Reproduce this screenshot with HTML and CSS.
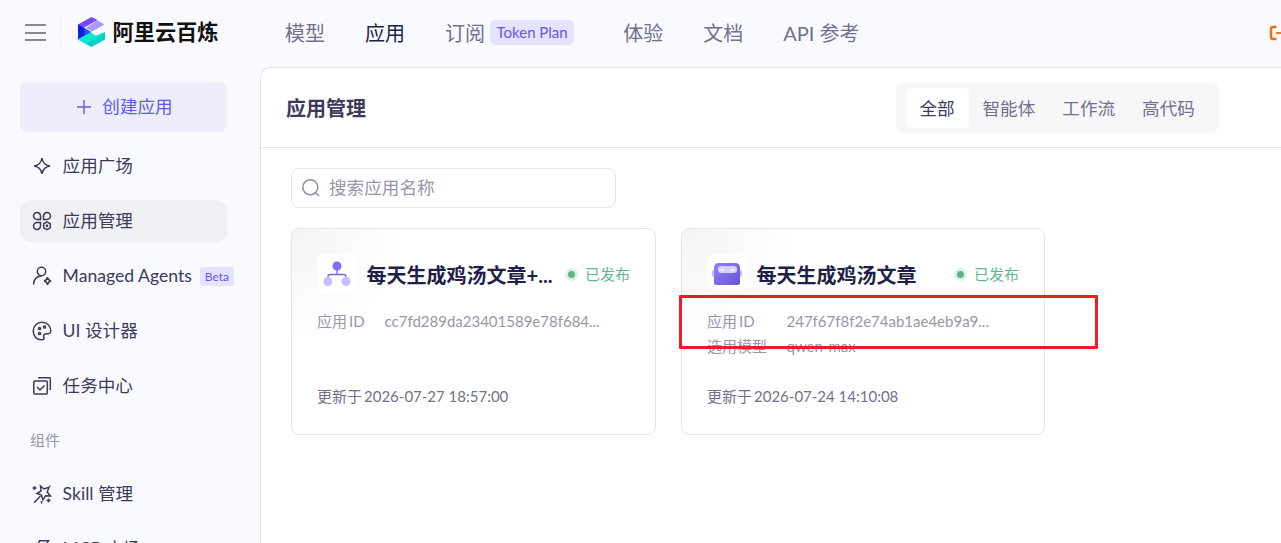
FILE: index.html
```html
<!DOCTYPE html>
<html lang="zh-CN">
<head>
    <meta charset="UTF-8">
    <meta name="viewport" content="width=device-width, initial-scale=1.0">
    <title>阿里云百炼</title>
    <link rel="stylesheet" href="styles.css">
</head>
<body>

    <!-- Top bar -->
    <header class="topbar">
        <div class="menu-btn"><span></span><span></span><span></span></div>
        <div class="brand">
            <svg class="logo" width="28" height="30" viewBox="0 0 28 30">
                <path d="M0 7.5 13.5 0l6 3L0 14z" fill="#7647ff"/>
                <path d="M19 3.2 26.5 7.5 14 14.5 8 11z" fill="#a999ff"/>
                <path d="M0 7.5 13 15 0 22.5z" fill="#0a22dc"/>
                <path d="M6.5 11.2 13 15l-6.500 3.800z" fill="#2858e6"/>
                <path d="M0 22.500 12.500 15.500 18 19l9-4v7.500L13.500 30z" fill="#02cfc8"/>
                <path d="M0 22.500 12.500 15.500 18 19 27 15v1.500L8 27z" fill="#05ead2"/>
            </svg>
            <span class="brand-name">阿里云百炼</span>
        </div>
        <nav class="nav">
            <a>模型</a>
            <a class="active">应用</a>
            <a>订阅<span class="tag">Token Plan</span></a>
            <a>体验</a>
            <a>文档</a>
            <a>API 参考</a>
        </nav>
        <svg class="ticket" width="12" height="16" viewBox="0 0 12 16" fill="none" stroke="#ff6a00">
            <path d="M7.500 2H4Q2 2 2 4v8q0 2 2 2h3.500" stroke-width="2.500"/>
            <path d="M7 8h5" stroke-width="1.800"/>
        </svg>
    </header>

    <div class="layout">
        <!-- Sidebar -->
        <aside class="sidebar">
            <button class="create-btn">
                <svg width="16" height="16" viewBox="0 0 16 16" fill="none" stroke="currentColor" stroke-width="1.400"><path d="M8 1v14M1 8h14"/></svg>
                创建应用
            </button>
            <div class="item">
                <svg class="icon" viewBox="0 0 20 20"><path d="M10 2Q11 9 18 10 11 11 10 18 9 11 2 10 9 9 10 2z"/></svg>
                应用广场
            </div>
            <div class="item selected">
                <svg class="icon" viewBox="0 0 20 20">
                    <path d="M8.500 8.500H5.200A3.500 3.500 0 1 1 8.500 5.200zM11.500 8.500V5.200a3.500 3.500 0 1 1 3.300 3.300zM8.500 11.500v3.300a3.500 3.500 0 1 1-3.300-3.300z"/>
                    <path d="M15 10.900 18.300 12.800v4L15 18.700l-3.300-1.900v-4z"/>
                    <circle cx="15" cy="14.800" r=".6"/>
                </svg>
                应用管理
            </div>
            <div class="item">
                <svg class="icon" viewBox="0 0 20 20">
                    <circle cx="9.500" cy="5.500" r="4.200"/>
                    <path d="M1.500 18.500Q1.800 11 9.500 9.800M15.500 11Q16 14.500 19 15 16 15.500 15.500 19 15 15.500 12 15 15 14.500 15.500 11z"/>
                </svg>
                Managed Agents<span class="beta">Beta</span>
            </div>
            <div class="item">
                <svg class="icon" viewBox="0 0 20 20">
                    <path d="M11 18.600C5 19.800 1.200 15 1.200 10a8.800 8.800 0 0 1 17.600 0c0 2-1.500 3-3.300 2.800-3-.5-4.500 1.200-3.700 3.200.4 1 .2 2.200-.8 2.600z"/>
                    <circle cx="7.500" cy="7.500" r="1.100"/><circle cx="12.500" cy="6" r="1.100"/><circle cx="7.500" cy="12.500" r="1.100"/>
                </svg>
                UI 设计器
            </div>
            <div class="item">
                <svg class="icon" viewBox="0 0 20 20"><rect x="1.800" y="5" width="13.500" height="13" rx="1"/><path d="M6 1.800h11.500q.8 0 .8.800V14M5 11l3 3 4.500-4.500"/></svg>
                任务中心
            </div>
            <div class="group">组件</div>
            <div class="item">
                <svg class="icon" viewBox="0 0 20 20">
                    <path d="M8.500 2 12 5l5-1.800-1.800 4.800 3.300 4-5-.3-2.500 4.300-1.500-5-4.500-1.500L9 7zM8.500 12 2 18.800M2.500 2v4M.5 4h4M16.500 14.500v4M14.500 16.500h4M9.500 17v2.500M18 1.500v1"/>
                </svg>
                Skill 管理
            </div>
            <div class="item">
                <svg class="icon" viewBox="0 0 20 20"><path d="M7.500 1.800h9L12.500 8H17L6 18.500 8.500 11H4z"/></svg>
                MCP 广场
            </div>
        </aside>

        <!-- Main Content -->
        <main class="main">
            <div class="page-header">
                <h1>应用管理</h1>
                <div class="tabs">
                    <span class="tab current">全部</span>
                    <span class="tab">智能体</span>
                    <span class="tab">工作流</span>
                    <span class="tab">高代码</span>
                </div>
            </div>

            <div class="content">
                <div class="search">
                    <svg width="20" height="20" viewBox="0 0 20 20" fill="none" stroke="#8f8ca3" stroke-width="1.500"><circle cx="9.300" cy="9.300" r="7.500"/><path d="m14.500 14.500 3.500 3.500"/></svg>
                    <span>搜索应用名称</span>
                </div>

                <div class="cards">
                    <div class="card">
                        <div class="card-head">
                            <div class="app-icon">
                                <svg width="40" height="40" viewBox="0 0 40 40">
                                    <path d="M20 12v8.500M11 27v-4.500q0-2 2-2h14q2 0 2 2V27" fill="none" stroke="#7764ee" stroke-width="1.300"/>
                                    <circle cx="20" cy="12" r="4.500" fill="#856cf6"/>
                                    <circle cx="11" cy="27.500" r="4.500" fill="#c5bfff"/>
                                    <circle cx="29" cy="27.500" r="4.500" fill="#c5bfff"/>
                                </svg>
                            </div>
                            <h2>每天生成鸡汤文章+...</h2>
                            <span class="status"><i></i>已发布</span>
                        </div>
                        <dl class="info">
                            <dt>应用<span>ID</span></dt><dd>cc7fd289da23401589e78f684...</dd>
                        </dl>
                        <p class="updated">更新于<span>2026-07-27 18:57:00</span></p>
                    </div>

                    <div class="card">
                        <div class="card-head">
                            <div class="app-icon">
                                <svg width="40" height="40" viewBox="0 0 40 40">
                                    <defs>
                                        <linearGradient id="bot" x1="0" y1="0" x2="1" y2="1">
                                            <stop offset="0" stop-color="#9480ff"/>
                                            <stop offset="1" stop-color="#6254d2"/>
                                        </linearGradient>
                                    </defs>
                                    <rect x="5" y="16" width="30" height="7" rx="2" fill="#c5bdff"/>
                                    <path d="M7 14q0-5 5-5h16q5 0 5 5v15q0 2-2 2H9q-2 0-2-2z" fill="url(#bot)"/>
                                    <rect x="11" y="12" width="19" height="7" rx="3" fill="#d7d0fa"/>
                                    <path d="M14.500 16h2M24.500 16h2" stroke="#fff" stroke-width="1.600" stroke-linecap="round"/>
                                </svg>
                            </div>
                            <h2>每天生成鸡汤文章</h2>
                            <span class="status"><i></i>已发布</span>
                        </div>
                        <dl class="info wide">
                            <dt>应用<span>ID</span></dt><dd>247f67f8f2e74ab1ae4eb9a9...</dd>
                            <dt>选用模型</dt><dd>qwen-max</dd>
                        </dl>
                        <p class="updated">更新于<span>2026-07-24 14:10:08</span></p>
                        <div class="highlight"></div>
                    </div>
                </div>
            </div>
        </main>
    </div>

</body>
</html>
```

FILE: styles.css
```css
/* General Reset */
* {
    margin: 0;
    padding: 0;
    box-sizing: border-box;
}

body {
    height: 100vh;
    overflow: hidden;
    display: flex;
    flex-direction: column;
    background: #f9faff;
    color: #3d3a5c;
    font-family: Lato, "Noto Sans CJK SC", sans-serif;
    font-size: 17.6px;
}

svg {
    flex: none;
    display: block;
}

/* Top bar */
.topbar {
    flex: none;
    height: 67px;
    display: flex;
    align-items: center;
    padding: 0 0 2px 25px;
}

.menu-btn {
    width: 36px;
    height: 32px;
    display: flex;
    flex-direction: column;
    justify-content: center;
    gap: 5.5px;
    border-right: 1px solid #eeeff4;
}

.menu-btn span {
    width: 21px;
    height: 2px;
    background: #89898b;
}

.brand {
    width: 224px;
    display: flex;
    align-items: center;
    gap: 7px;
    padding-left: 16.5px;
}

.logo {
    margin-bottom: 2px;
}

.brand-name {
    color: #111;
    font-size: 21.2px;
    font-weight: 700;
    line-height: 28px;
    padding-bottom: 2px;
}

.nav {
    display: flex;
    gap: 40px;
    color: #72708c;
    font-size: 20px;
    line-height: 30px;
}

.nav a {
    display: flex;
    align-items: center;
    white-space: nowrap;
}

.nav a:nth-child(3) {
    margin-right: 9px;
}

.nav .active {
    color: #211f47;
}

.tag {
    height: 25px;
    margin-left: 5px;
    padding: 0 6.5px;
    border-radius: 5px;
    background: #e6e3ff;
    color: #6257e8;
    font-size: 15px;
    line-height: 25px;
}

.ticket {
    margin-left: auto;
}

/* Sidebar */
.layout {
    flex: 1;
    min-height: 0;
    display: flex;
}

.sidebar {
    flex: none;
    width: 260px;
    padding: 15px 26px 0 20px;
}

.create-btn {
    width: 207px;
    height: 50px;
    display: flex;
    justify-content: center;
    align-items: center;
    gap: 10px;
    margin-bottom: 13px;
    padding-left: 2px;
    border: none;
    border-radius: 8px;
    background: #eeedfb;
    color: #6159ee;
    font: inherit;
    line-height: 50px;
}

.item {
    width: 207px;
    height: 42px;
    display: flex;
    align-items: center;
    margin-bottom: 13px;
    padding-left: 12.4px;
    border-radius: 10px;
    line-height: 42px;
    white-space: nowrap;
}

.item.selected {
    background: #f0f1f5;
}

.icon {
    width: 20px;
    height: 20px;
    margin-right: 10.2px;
    fill: none;
    stroke: #3d3a5c;
    stroke-width: 1.5;
}

.beta {
    height: 19px;
    margin: 1px 0 0 8px;
    padding: 0 5px;
    border-radius: 3px;
    background: #e6e3ff;
    color: #6257e8;
    font-size: 12px;
    line-height: 19px;
}

.group {
    height: 40px;
    margin-bottom: 13px;
    padding-left: 10px;
    color: #9896aa;
    font-size: 15px;
    line-height: 40px;
}

/* Main Content */
.main {
    flex: 1;
    border-top: 1px solid #e4e5eb;
    border-left: 1px solid #e4e5eb;
    border-top-left-radius: 10px;
    background: #fff;
}

.page-header {
    height: 80px;
    display: flex;
    justify-content: space-between;
    align-items: center;
    padding: 0 62px 0 25px;
    border-bottom: 1px solid #e4e5eb;
}

.page-header h1 {
    font-size: 20px;
    line-height: 30px;
}

.tabs {
    width: 323px;
    height: 50px;
    display: flex;
    align-items: center;
    padding-left: 10px;
    border-radius: 8px;
    background: #f7f7fa;
    color: #72708c;
}

.tab {
    height: 40px;
    padding: 0 13.5px;
    line-height: 42px;
}

.tab.current {
    width: 63px;
    border-radius: 5px;
    background: #fff;
    color: #3d3a5c;
}

.content {
    padding: 20px 30px;
}

.search {
    width: 325px;
    height: 40px;
    display: flex;
    align-items: center;
    gap: 8px;
    padding-left: 9px;
    border: 1px solid #e5e5ed;
    border-radius: 8px;
    color: #9896aa;
    line-height: 38px;
}

.cards {
    display: grid;
    grid-template-columns: 365px 364px;
    gap: 25px;
    margin-top: 20px;
}

.card {
    position: relative;
    height: 207px;
    display: flex;
    flex-direction: column;
    padding: 25px;
    border: 1px solid #e5e5ed;
    border-radius: 8px;
    background: radial-gradient(circle at 0 0, #f4f4f7, #fff 115px);
    font-size: 15px;
}

.card-head {
    height: 40px;
    display: flex;
    align-items: center;
}

.app-icon {
    margin-right: 9.6px;
    border-radius: 8px;
    background: #fff;
}

.card h2 {
    padding-top: 2px;
    color: #211f47;
    font-size: 20px;
    line-height: 32px;
    white-space: nowrap;
}

.status {
    display: flex;
    align-items: center;
    gap: 7px;
    margin-left: auto;
    color: #5bb98c;
    line-height: 40px;
    white-space: nowrap;
}

.status i {
    width: 13px;
    height: 13px;
    border: 3px solid #dff0e8;
    border-radius: 50%;
    background: #5cb48c;
}

.info {
    display: grid;
    grid-template-columns: 67.5px 1fr;
    grid-auto-rows: 25px;
    margin-top: 15px;
    color: #9896aa;
    line-height: 25px;
}

.info.wide {
    grid-template-columns: 79.5px 1fr;
}

.info span {
    margin-left: 2px;
}

.updated {
    margin-top: auto;
    color: #72708c;
    line-height: 25px;
}

.updated span {
    margin-left: 2px;
}

/* Red marker box over the card */
.highlight {
    position: absolute;
    top: 66px;
    left: -3px;
    width: 419px;
    height: 54px;
    border: 3px solid #ed1c24;
    border-radius: 1px;
}
```
